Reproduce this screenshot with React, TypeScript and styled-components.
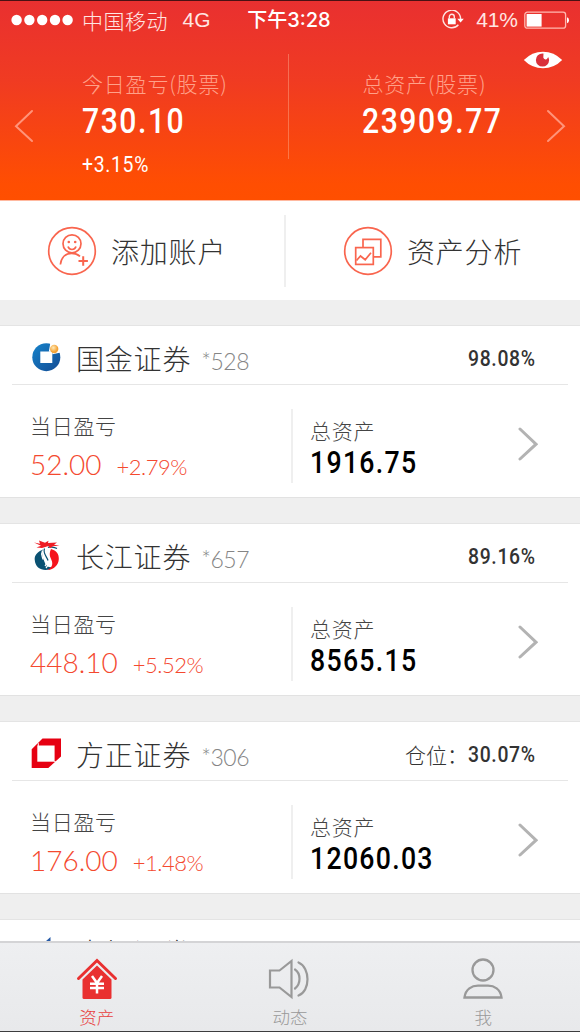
import React from "react";
import styled, { createGlobalStyle } from "styled-components";

const GlobalStyle = createGlobalStyle`
  * { box-sizing: border-box; }
  html, body { margin: 0; padding: 0; background: #efefef; }
  body { font-family: "Noto Sans CJK SC", sans-serif; font-weight: 300; }
  svg { display: block; flex: none; }
`;

const Screen = styled.div`
  display: flex;
  flex-direction: column;
  width: 580px;
  height: 1032px;
  overflow: hidden;
  background: #efefef;
`;

const Hero = styled.header`
  height: 201px;
  flex: none;
  border-top: 1px solid #4a1113;
  border-bottom: 1px solid #ffb9a0;
  background: linear-gradient(#e93030 0%, #f03b22 40%, #ff4e02 92%, #ff4f00 100%);
  color: #fff;
`;

const StatusBar = styled.div`
  display: flex;
  align-items: center;
  height: 38px;
  padding: 0 10px 0 11px;
  font-size: 21px;
  line-height: 38px;
  white-space: nowrap;
`;

const Carrier = styled.span`
  width: 101px;
  margin-left: 8px;
  letter-spacing: 0.5px;
  color: #ffe6e3;
`;

const Network = styled.span`
  width: 65px;
  font-family: "Liberation Sans", sans-serif;
  font-size: 21px;
  color: #ffe6e3;
`;

const Clock = styled.span`
  width: 196px;
  font-family: "Inter", "Noto Sans CJK SC", sans-serif;
  font-size: 20px;
  font-weight: 500;
`;

const BatteryText = styled.span`
  width: 48px;
  margin-left: 11px;
  font-family: "Liberation Sans", sans-serif;
  font-size: 21px;
  letter-spacing: -0.2px;
  color: #ffe6e3;
`;

const HeroBody = styled.div`
  position: relative;
  display: flex;
  align-items: flex-start;
  padding: 15px 14px 0;
`;

const EyeButton = styled.span`
  position: absolute;
  right: 17px;
  top: 12px;
`;

const ArrowSlot = styled.span`
  width: 20px;
  padding-top: 55px;
`;

const HeroStat = styled.div<{ $width: number; $left: number }>`
  width: ${(p) => p.$width}px;
  padding-left: ${(p) => p.$left}px;
  padding-top: 13px;
`;

const HeroLabel = styled.div`
  height: 32px;
  line-height: 32px;
  font-size: 21px;
  letter-spacing: 0.8px;
  color: #ffa189;
  white-space: nowrap;
`;

const Figure = styled.div<{ $size: number; $spacing?: number; $weight?: number; $line: number }>`
  width: max-content;
  font-family: "Roboto", sans-serif;
  font-size: ${(p) => p.$size}px;
  font-weight: ${(p) => p.$weight ?? 500};
  letter-spacing: ${(p) => p.$spacing ?? 0}px;
  line-height: ${(p) => p.$line}px;
  transform: scaleX(0.86);
  transform-origin: left center;
`;

const HeroRule = styled.span`
  width: 1px;
  height: 105px;
  background: rgba(255, 190, 160, 0.4);
`;

const Actions = styled.nav`
  display: flex;
  align-items: center;
  flex: none;
  height: 99px;
  background: #fff;
`;

const Action = styled.div<{ $left: number }>`
  display: flex;
  align-items: center;
  flex: 1;
  gap: 14px;
  padding-left: ${(p) => p.$left}px;
  font-size: 28px;
  letter-spacing: 0.8px;
  line-height: 40px;
  color: #333;
`;

const VerticalRule = styled.span<{ $height: number }>`
  width: 2px;
  height: ${(p) => p.$height}px;
  flex: none;
  background: #efefef;
`;

const AccountList = styled.main`
  flex: 1;
  min-height: 0;
  overflow: hidden;
  padding-top: 25px;
`;

const Card = styled.section`
  height: 173px;
  margin-bottom: 25px;
  border-top: 1px solid #e4e4e4;
  border-bottom: 1px solid #e2e2e2;
  background: #fff;
`;

const CardHead = styled.div`
  display: flex;
  align-items: center;
  height: 59px;
  margin: 0 12px;
  padding: 5px 30px 0 18px;
  border-bottom: 1px solid #e6e6e6;
`;

const LogoSlot = styled.span`
  width: 46px;
  padding-bottom: 2px;
`;

const BrokerName = styled.span`
  font-size: 28px;
  letter-spacing: 0.8px;
  line-height: 40px;
  color: #333;
`;

const AccountTail = styled.span`
  flex: 1;
  padding: 6px 0 0 10px;
  font-family: "Lato", sans-serif;
  font-size: 23px;
  font-weight: 300;
  letter-spacing: -0.5px;
  line-height: 30px;
  color: #858585;
`;

const Position = styled.span`
  display: flex;
  align-items: center;
  font-size: 21px;
  line-height: 30px;
  color: #333;
`;

const PositionValue = styled.span`
  width: 70px;
`;

const CardBody = styled.div`
  display: flex;
  height: 111px;
  padding: 24px 0 0 30px;
`;

const DayColumn = styled.div`
  width: 261px;
`;

const SmallLabel = styled.div`
  height: 32px;
  font-size: 21px;
  letter-spacing: 0.7px;
  line-height: 32px;
  color: #444;
`;

const Gain = styled.div`
  display: flex;
  align-items: baseline;
  gap: 15px;
  padding-top: 3px;
  font-family: "Lato", sans-serif;
  font-weight: 300;
  font-size: 28px;
  line-height: 40px;
  color: #f4492f;
`;

const GainPercent = styled.span`
  font-size: 22px;
  letter-spacing: -0.5px;
`;

const AssetColumn = styled.div`
  width: 225px;
  padding: 5px 0 0 17px;
  color: #000;
`;

const DetailArrow = styled.span`
  padding-top: 18px;
`;

const TabBar = styled.footer`
  display: flex;
  flex: none;
  height: 91px;
  padding-top: 14px;
  border-top: 2px solid #d4d4d6;
  border-bottom: 1px solid #3c3c3e;
  background: linear-gradient(#eeeff1, #e8e9eb);
`;

const Tab = styled.div<{ $active?: boolean }>`
  display: flex;
  flex-direction: column;
  align-items: center;
  flex: 1;
  font-size: 17.5px;
  line-height: 24px;
  color: ${(p) => (p.$active ? "#e8403e" : "#999")};
`;

const TabLabel = styled.span`
  margin-top: 5px;
`;

const SignalDots = () => (
  <svg width="63" height="12" fill="#fff">
    {[5.6, 18.4, 31.2, 44, 56.6].map((x) => (
      <circle key={x} cx={x} cy="6" r="5.2" />
    ))}
  </svg>
);

const RotationLock = () => (
  <svg width="23" height="20" viewBox="0 0 23 20" fill="none" stroke="#ffe6e3" strokeWidth="1.4">
    <path d="M16.4 14.8A8.8 8.8 0 1 1 18.6 9" />
    <path d="M15.3 8.8h6.5l-3.2 3.8z" fill="#fff" stroke="none" />
    <rect x="5.9" y="8.3" width="7.8" height="6" fill="#fff" stroke="none" />
    <path d="M7.3 8.5V6.7a2.5 2.5 0 0 1 5 0v1.8" />
  </svg>
);

const Battery = () => (
  <svg width="46" height="19" viewBox="0 0 46 19">
    <rect x="0.8" y="1.2" width="40.8" height="16" rx="2.5" fill="none" stroke="#ffb8b0" strokeWidth="1.3" />
    <rect x="2.6" y="3" width="15" height="12.6" fill="#fff" />
    <path d="M43 6.3q2 .6 2 3t-2 3z" fill="#fff" />
  </svg>
);

const Eye = () => (
  <svg width="40" height="18" viewBox="0 0 40 18">
    <path d="M.8 9Q9 .7 20 .7T39.2 9Q31 17.3 20 17.3T.8 9z" fill="#fff" />
    <circle cx="19.5" cy="9" r="6.6" fill="#d9303a" />
    <path d="M20.5 2.4l-.2 4.2q.4 2 2.5 1.8 1.5-.1 1.9-1.7l1.8-1L24.5 2z" fill="#fff" />
  </svg>
);

const Chevron = ({ left, color, width = 2 }: { left?: boolean; color: string; width?: number }) => (
  <svg width="20" height="34" viewBox="0 0 20 34" fill="none" stroke={color} strokeWidth={width} strokeLinecap="round">
    <path d={left ? "M18 2L2 17.2 18 32" : "M2 2l16 15.2L2 32"} />
  </svg>
);

const AddAccountIcon = () => (
  <svg width="50" height="50" viewBox="0 0 50 50" fill="none" stroke="#f9654e" strokeWidth="1.7">
    <circle cx="25" cy="25" r="23.3" />
    <circle cx="25" cy="17.8" r="9" />
    <path d="M13.4 38.5c.8-7 5-11.2 11.2-11.2 3.200 0 6 .8 8.400 3M21 20.500q1 3 4 3t4-3" />
    <path d="M31.500 35h9.400M36.200 30.300v9.400" strokeWidth="2" />
    <circle cx="21.800" cy="16" r="1.300" fill="#f9654e" stroke="none" />
    <circle cx="28.200" cy="16" r="1.300" fill="#f9654e" stroke="none" />
  </svg>
);

const AnalysisIcon = () => (
  <svg width="50" height="50" viewBox="0 0 50 50" fill="none" stroke="#f9654e" strokeWidth="1.700">
    <circle cx="25" cy="25" r="23.300" />
    <rect x="12.700" y="21.600" width="17.600" height="16.800" />
    <path d="M20 21.600v-8.300h17.800v17.500h-7.500M13.500 34.500l4-4.500 4.700 3.700 5.800-7" />
  </svg>
);

const GuojinLogo = () => (
  <svg width="32" height="30" viewBox="0 0 32 30">
    <defs>
      <linearGradient id="gj" x2="1" y2="1">
        <stop offset="0" stopColor="#1683cb" />
        <stop offset="1" stopColor="#134b93" />
      </linearGradient>
      <radialGradient id="ball" cx=".4" cy=".35">
        <stop offset="0" stopColor="#ffe9b5" />
        <stop offset="1" stopColor="#f3a236" />
      </radialGradient>
    </defs>
    <circle cx="16.300" cy="15.200" r="14" fill="url(#gj)" />
    <rect x="10.300" y="9.500" width="12" height="11.500" fill="#fff" />
    <path d="M20.500 0l-1.700 9.800h3.500l.2 2.500 9.500-2V0z" fill="#fff" />
    <circle cx="24.200" cy="7" r="4.200" fill="url(#ball)" />
  </svg>
);

const ChangjiangLogo = () => (
  <svg width="32" height="32" viewBox="0 0 32 32">
    <path d="M13 10.500C7 13 4.500 16.500 4.700 20.500 5 27.500 10 31 15.500 31c3 0 6-1 8-3-5 1-7.500-1-9-5-1.200-4-3.500-7-1.500-12.500z" fill="#0a5172" />
    <path d="M21 10c5.500 1.500 8 5 7.800 10-.2 6-4.800 10.500-11.300 11 3.500-2 5.500-4.500 4.500-8.500-.8-3.500-4-6-1-12.500z" fill="#f5141d" />
    <path d="M18.500 8c-6 4-1.500 8-.5 12 1 3.500.5 6.500-2 9M15.500 9.500c-4 4-1.500 7 0 10.500 1.200 3 1 5.500-.5 7M12.500 11.500c-2 4 0 6 .5 9" stroke="#fff" strokeWidth="1.300" fill="none" />
    <path d="M14.500 9.500c-2 5 2.500 8 3.500 12M18 8.500c1.500-1 6-.5 9 1" stroke="#0a5172" strokeWidth="1.200" fill="none" />
    <path d="M4 3.500l6 1.200L9 1.500l6 2.300 3.500-2L18 4l9-.5-3 2.200 5.500.8-6.500.8-3 2L18.500 7 12 9l-5.500-.5L11 6.800z" fill="#ee1c24" />
  </svg>
);

const FounderLogo = () => (
  <svg width="32" height="32" viewBox="0 0 32 32">
    <path d="M1.700 12.200L12.500 1.500H31v18L18.300 31H1.700z" fill="#e60012" />
    <path d="M7.300 8.500h17.300v16.200H7.300z" fill="#fff" />
    <path d="M8.300 6.200v3M24.300 24.500h1.200" stroke="#fff" />
  </svg>
);

const ZhongtouLogo = () => (
  <svg width="32" height="32" viewBox="0 0 32 32">
    <path d="M20.500 2v28H5V16z" fill="#2459a6" />
    <path d="M22 14l6 5v11h-6z" fill="#d92b2b" />
  </svg>
);

const HomeIcon = () => (
  <svg width="42" height="43" viewBox="0 0 42 43">
    <path d="M2.500 21.500L21 3.500l18.500 18" fill="none" stroke="#e93030" strokeWidth="3" strokeLinecap="round" />
    <path d="M21 8.500l14.500 14v18a1.500 1.500 0 0 1-1.500 1.500H8a1.500 1.500 0 0 1-1.500-1.500v-18z" fill="#e93030" />
    <path d="M16 19l5 7 5-7M14 26.700h14M14 31h14M21 26v10.500" fill="none" stroke="#fff" strokeWidth="2.500" />
  </svg>
);

const SoundIcon = () => (
  <svg width="43" height="43" viewBox="0 0 43 43" fill="none" stroke="#999" strokeWidth="2.200">
    <path d="M2 13.500h9.500L23.500 4v36L11.500 30.500H2z" />
    <path d="M27 12.500c6 4 6 14.500 0 19M30.500 5.500c12 5 12 28.500 0 33" strokeLinecap="round" />
  </svg>
);

const PersonIcon = () => (
  <svg width="42" height="43" viewBox="0 0 42 43" fill="none" stroke="#999" strokeWidth="2.300">
    <circle cx="21" cy="13" r="10.500" />
    <path d="M2.500 40.500C3.500 32 10 28.700 16 28.700h10c6 0 12.500 3.300 13.500 11.800z" />
  </svg>
);

interface Account {
  name: string;
  tail: string;
  logo: React.ReactNode;
  label?: string;
  position: string;
  gain: string;
  percent: string;
  total: string;
}

const accounts: Account[] = [
  { name: "国金证券", tail: "*528", logo: <GuojinLogo />, position: "98.08%", gain: "52.00", percent: "+2.79%", total: "1916.75" },
  { name: "长江证券", tail: "*657", logo: <ChangjiangLogo />, position: "89.16%", gain: "448.10", percent: "+5.52%", total: "8565.15" },
  { name: "方正证券", tail: "*306", logo: <FounderLogo />, label: "仓位：", position: "30.07%", gain: "176.00", percent: "+1.48%", total: "12060.03" },
];

export default function App() {
  return (
    <>
      <GlobalStyle />
      <Screen>
        <Hero>
          <StatusBar>
            <SignalDots />
            <Carrier>中国移动</Carrier>
            <Network>4G</Network>
            <Clock>下午3:28</Clock>
            <RotationLock />
            <BatteryText>41%</BatteryText>
            <Battery />
          </StatusBar>
          <HeroBody>
            <ArrowSlot>
              <Chevron left color="#ff947a" />
            </ArrowSlot>
            <HeroStat $width={255} $left={48}>
              <HeroLabel>今日盈亏(股票)</HeroLabel>
              <Figure $size={35} $spacing={1.8} $line={46}>730.10</Figure>
              <Figure $size={22.500} $spacing={0.800} $line={38} $weight={400}>+3.15%</Figure>
            </HeroStat>
            <HeroRule />
            <HeroStat $width={257} $left={73}>
              <HeroLabel>总资产(股票)</HeroLabel>
              <Figure $size={35} $spacing={1.800} $line={46}>23909.77</Figure>
            </HeroStat>
            <ArrowSlot>
              <Chevron color="#ff947a" />
            </ArrowSlot>
            <EyeButton>
              <Eye />
            </EyeButton>
          </HeroBody>
        </Hero>
        <Actions>
          <Action $left={47}>
            <AddAccountIcon />
            添加账户
          </Action>
          <VerticalRule $height={72} />
          <Action $left={57}>
            <AnalysisIcon />
            资产分析
          </Action>
        </Actions>
        <AccountList>
          {accounts.map((a) => (
            <Card key={a.name}>
              <CardHead>
                <LogoSlot>{a.logo}</LogoSlot>
                <BrokerName>{a.name}</BrokerName>
                <AccountTail>{a.tail}</AccountTail>
                <Position>
                  {a.label}
                  <PositionValue>
                    <Figure $size={22.500} $spacing={0.800} $line={30}>{a.position}</Figure>
                  </PositionValue>
                </Position>
              </CardHead>
              <CardBody>
                <DayColumn>
                  <SmallLabel>当日盈亏</SmallLabel>
                  <Gain>
                    {a.gain}
                    <GainPercent>{a.percent}</GainPercent>
                  </Gain>
                </DayColumn>
                <VerticalRule $height={74} />
                <AssetColumn>
                  <SmallLabel>总资产</SmallLabel>
                  <Figure $size={31} $spacing={1.500} $line={34}>{a.total}</Figure>
                </AssetColumn>
                <DetailArrow>
                  <Chevron color="#b3b3b3" width={3} />
                </DetailArrow>
              </CardBody>
            </Card>
          ))}
          <Card>
            <CardHead>
              <LogoSlot>
                <ZhongtouLogo />
              </LogoSlot>
              <BrokerName>中投证券</BrokerName>
              <AccountTail />
              <Position>
                仓位：
                <PositionValue />
              </Position>
            </CardHead>
          </Card>
        </AccountList>
        <TabBar>
          <Tab $active>
            <HomeIcon />
            <TabLabel>资产</TabLabel>
          </Tab>
          <Tab>
            <SoundIcon />
            <TabLabel>动态</TabLabel>
          </Tab>
          <Tab>
            <PersonIcon />
            <TabLabel>我</TabLabel>
          </Tab>
        </TabBar>
      </Screen>
    </>
  );
}
